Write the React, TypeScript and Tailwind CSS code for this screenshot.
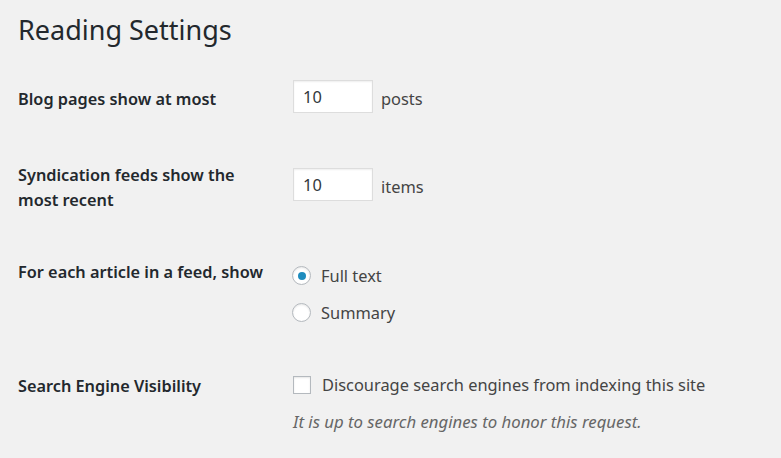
import React from "react";

function Radio({ checked, label }: { checked?: boolean; label: string }) {
  return (
    <label className="flex h-[25px] items-center">
      <span className="flex h-[19px] w-[19px] items-center justify-center rounded-full border border-[#b4b9be] bg-white shadow-[inset_0_1px_2px_rgba(0,0,0,0.1)]">
        {checked && <span className="h-[8px] w-[8px] rounded-full bg-[#1e8cbe]" />}
      </span>
      <span className="ml-[10px]">{label}</span>
    </label>
  );
}

function NumInput({ unit }: { unit: string }) {
  return (
    <div className="flex items-center">
      <div className="flex h-[33px] w-[80px] items-center border border-[#dddddd] bg-white pl-[9px] text-[#32373c] shadow-[inset_0_1px_2px_rgba(0,0,0,0.07)]">
        10
      </div>
      <span className="ml-[8px] pt-[3px]">{unit}</span>
    </div>
  );
}

export default function App() {
  return (
    <div className="min-h-screen bg-[#f1f1f1] pl-[18px] font-['Noto_Sans',sans-serif] text-[16.4px] leading-[25px] text-[#444]">
      <h1 className="pt-[12px] text-[27px] font-normal leading-[36px] text-[#23282d]">Reading Settings</h1>

      <div className="mt-[32px] grid grid-cols-[275px_1fr]">
        <div className="pt-[7px] text-[16.3px] font-semibold text-[#23282d]">Blog pages show at most</div>
        <NumInput unit="posts" />
      </div>

      <div className="mt-[50px] grid grid-cols-[275px_1fr]">
        <div className="text-[16.3px] font-semibold text-[#23282d]">
          Syndication feeds show the
          <br />
          most recent
        </div>
        <div className="pt-[5px]">
          <NumInput unit="items" />
        </div>
      </div>

      <div className="mt-[47px] grid grid-cols-[274px_1fr]">
        <div className="text-[16.3px] font-semibold text-[#23282d]">For each article in a feed, show</div>
        <div className="flex flex-col gap-[12px] pt-[3px]">
          <Radio checked label="Full text" />
          <Radio label="Summary" />
        </div>
      </div>

      <div className="mt-[47px] grid grid-cols-[275px_1fr]">
        <div className="pt-[2px] text-[16.3px] font-semibold text-[#23282d]">Search Engine Visibility</div>
        <div className="flex flex-col gap-[12px]">
          <label className="flex h-[25px] items-center">
            <span className="h-[18px] w-[18px] border border-[#b4b9be] bg-white shadow-[inset_0_1px_2px_rgba(0,0,0,0.1)]" />
            <span className="ml-[11px]">Discourage search engines from indexing this site</span>
          </label>
          <p className="text-[16.75px] italic text-[#666]">It is up to search engines to honor this request.</p>
        </div>
      </div>
    </div>
  );
}
